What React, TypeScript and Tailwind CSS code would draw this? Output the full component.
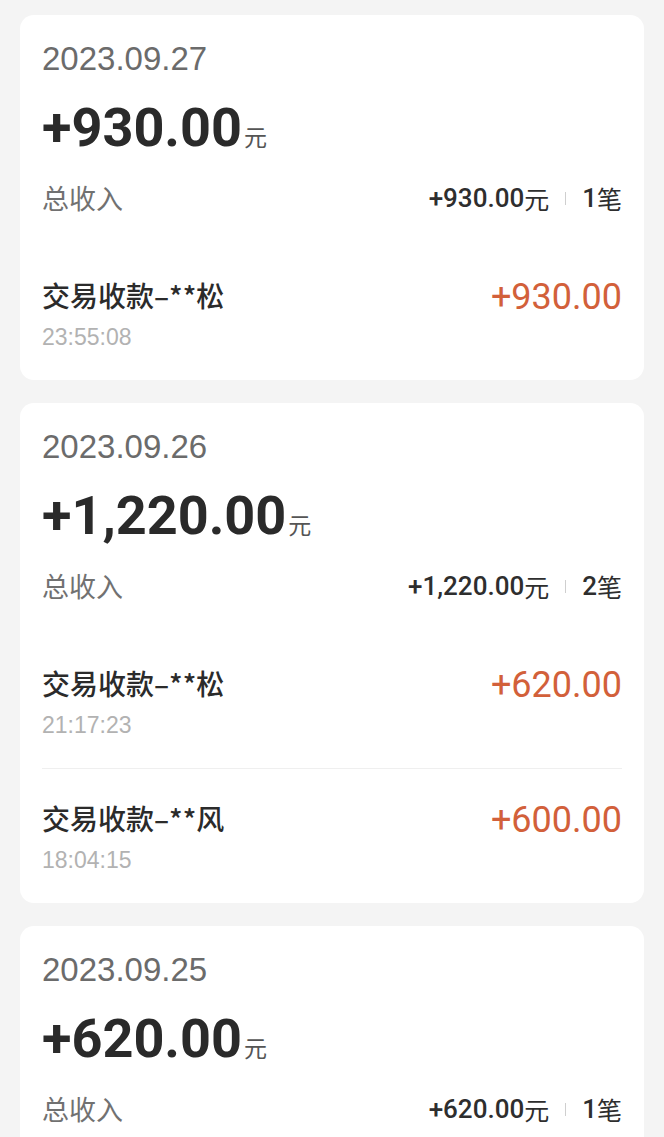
import React from "react";

type Row = { name: string; time: string; amount: string };
type Day = { date: string; total: string; count: number; rows: Row[] };

const days: Day[] = [
  {
    date: "2023.09.27",
    total: "+930.00",
    count: 1,
    rows: [{ name: "交易收款–**松", time: "23:55:08", amount: "+930.00" }],
  },
  {
    date: "2023.09.26",
    total: "+1,220.00",
    count: 2,
    rows: [
      { name: "交易收款–**松", time: "21:17:23", amount: "+620.00" },
      { name: "交易收款–**风", time: "18:04:15", amount: "+600.00" },
    ],
  },
  {
    date: "2023.09.25",
    total: "+620.00",
    count: 1,
    rows: [{ name: "交易收款–**松", time: "20:11:42", amount: "+620.00" }],
  },
];

const cjk = "font-['Noto_Sans_CJK_SC',sans-serif]";
const num = "font-['Roboto','Noto_Sans_CJK_SC',sans-serif]";
const helv = "font-['Liberation_Sans','Noto_Sans_CJK_SC',sans-serif]";

function DayCard({ day }: { day: Day }) {
  return (
    <div className="mb-[23px] rounded-[14px] bg-white px-[22px] pt-[28px]">
      <div className="mb-[28px]">
        <div className={`${helv} text-[33px] leading-[32px] text-[#6b6b6b]`}>{day.date}</div>
        <div className="mt-[23px] flex h-[60px] items-baseline leading-[60px]">
          <span className={`${num} text-[54px] font-bold text-[#2a2a2a]`}>{day.total}</span>
          <span className={`${cjk} ml-[2px] text-[23px] text-[#555555]`}>元</span>
        </div>
        <div className="mt-[20px] flex h-[40px] items-center justify-between">
          <span className={`${cjk} text-[27px] leading-[40px] text-[#717171]`}>总收入</span>
          <div className="flex items-center text-[#2e2e2e]">
            <span className={`${num} text-[26px] font-medium leading-[40px]`}>{day.total}</span>
            <span className={`${cjk} text-[25px] leading-[40px]`}>元</span>
            <span className="mx-[16px] h-[13px] w-[1px] bg-[#cfcfcf]" />
            <span className={`${num} text-[26px] font-medium leading-[40px]`}>{day.count}</span>
            <span className={`${cjk} text-[25px] leading-[40px]`}>笔</span>
          </div>
        </div>
      </div>
      {day.rows.map((r, i) => (
        <div key={i} className={`pt-[32px] pb-[31px] ${i > 0 ? "border-t border-[#efefef]" : ""}`}>
          <div className="flex h-[34px] items-center justify-between">
            <span className={`${cjk} text-[28px] font-medium leading-[34px] text-[#2b2b2b]`}>{r.name}</span>
            <span className={`${num} mt-[3px] text-[36px] leading-[34px] text-[#d2603a]`}>{r.amount}</span>
          </div>
          <div className={`${helv} mt-[13px] text-[23px] leading-[24px] text-[#b2b2b2]`}>{r.time}</div>
        </div>
      ))}
    </div>
  );
}

export default function App() {
  return (
    <div className="min-h-[1137px] bg-[#f4f4f4] px-[20px] pt-[15px]">
      {days.map((d) => (
        <DayCard key={d.date} day={d} />
      ))}
    </div>
  );
}
